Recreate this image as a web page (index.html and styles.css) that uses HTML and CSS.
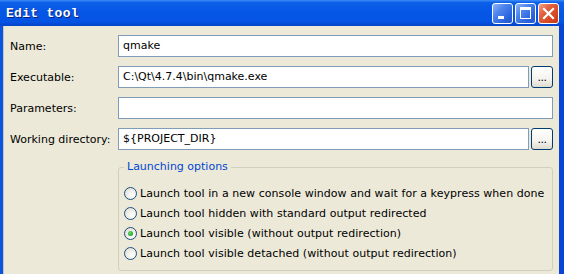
FILE: index.html
```html
<!DOCTYPE html>
<html lang="en">
<head>
  <meta charset="UTF-8">
  <title>Edit tool</title>
  <link rel="stylesheet" href="styles.css">
</head>
<body>
  <div class="window">
    <div class="titlebar">
      <span class="title">Edit tool</span>
      <div class="caption-buttons">
        <div class="cap cap-min"><span></span></div>
        <div class="cap cap-max"><span></span></div>
        <div class="cap cap-close">
          <svg width="13" height="13" viewBox="0 0 13 13"><path d="M2 2 L11 11 M11 2 L2 11" stroke="#fff" stroke-width="2.2" stroke-linecap="square"/></svg>
        </div>
      </div>
    </div>
    <div class="content">
      <div class="form">
        <label>Name:</label>
        <div class="field"><div class="input">qmake</div></div>

        <label>Executable:</label>
        <div class="field"><div class="input">C:\Qt\4.7.4\bin\qmake.exe</div><div class="browse">...</div></div>

        <label>Parameters:</label>
        <div class="field"><div class="input"></div></div>

        <label>Working directory:</label>
        <div class="field"><div class="input">${PROJECT_DIR}</div><div class="browse">...</div></div>
      </div>

      <fieldset class="group">
        <legend>Launching options</legend>
        <div class="radio"><span class="dot"></span>Launch tool in a new console window and wait for a keypress when done</div>
        <div class="radio"><span class="dot"></span>Launch tool hidden with standard output redirected</div>
        <div class="radio checked"><span class="dot"></span>Launch tool visible (without output redirection)</div>
        <div class="radio"><span class="dot"></span>Launch tool visible detached (without output redirection)</div>
      </fieldset>
    </div>
  </div>
</body>
</html>
```

FILE: styles.css
```css
:root {
  --face: #ece9d8;
  --edit-border: #7f9db9;
  --xp-blue: #0855e3;
}
body {
  margin: 0;
  background: var(--face);
  font-family: "DejaVu Sans", Tahoma, sans-serif;
  font-size: 11px;
  color: #000;
  overflow: hidden;
}
.window {
  width: 564px;
  height: 274px;
  overflow: hidden;
}
.titlebar {
  display: flex; align-items: center; justify-content: space-between;
  height: 26px;
  padding: 0 5px 0 6px;
  background: linear-gradient(to bottom, #3d8cf6 0%, #0c5fe8 10%, #0657e6 45%, #0553e2 85%, #0443c8 100%);
}
.title {
  font-family: "Liberation Mono", monospace;
  font-weight: bold;
  font-size: 13px;
  color: #fff;
  text-shadow: 1px 1px 0 #0a1e80;
  letter-spacing: 0.3px;
  margin-top: 1px;
}
.caption-buttons { display: flex; gap: 2px; }
.cap {
  width: 21px; height: 21px;
  box-sizing: border-box;
  border: 1px solid #fff;
  border-radius: 3px;
  position: relative;
  display: flex; align-items: center; justify-content: center;
}
.cap-min, .cap-max {
  background: linear-gradient(135deg, #8fb3f7 0%, #4d85ee 35%, #2a63dd 75%, #2457cf 100%);
}
.cap-min span {
  position: absolute; left: 5px; bottom: 4px;
  width: 6px; height: 3px; background: #fff;
}
.cap-max span {
  width: 9px; height: 8px;
  border: 1px solid #fff; border-top-width: 3px;
}
.cap-close {
  background: linear-gradient(135deg, #f1a08a 0%, #e2603d 35%, #d5451f 75%, #c33c1b 100%);
}
.content {
  height: 248px;
  border-left: 3px solid var(--xp-blue);
  border-right: 5px solid #0845d6;
  padding: 9px 6px 0 7px;
  box-shadow: inset 1px 0 0 #c8c6b6;
}
.form {
  display: grid;
  grid-template-columns: 108px 1fr;
  row-gap: 9px;
  align-items: center;
}
.field { display: flex; gap: 2px; }
.input {
  flex: 1;
  height: 22px;
  box-sizing: border-box;
  border: 1px solid var(--edit-border);
  background: #fff;
  padding: 0 4px;
  line-height: 20px;
  white-space: nowrap;
}
.browse {
  width: 22px; height: 22px;
  box-sizing: border-box;
  border: 1px solid #003c74;
  border-radius: 3px;
  background: linear-gradient(to bottom, #ffffff 0%, #f4f3ee 60%, #dedbd0 100%);
  text-align: center;
  line-height: 22px;
  font-size: 11px;
  letter-spacing: -0.5px;
}
.group {
  margin: 10px 0 0 108px;
  padding: 9px 4px 7px 5px;
  border: 1px solid #d0d0bf;
  border-radius: 3px;
}
.group legend {
  padding: 0 3px;
  color: #0046d5;
  line-height: 14px;
}
.radio {
  display: flex; align-items: center;
  height: 20px;
  white-space: nowrap;
  letter-spacing: 0.05px;
}
.dot {
  width: 13px; height: 13px;
  box-sizing: border-box;
  border: 1px solid #1c5180;
  border-radius: 50%;
  background: radial-gradient(circle at 65% 65%, #ffffff 0%, #f2f1ec 40%, #d6d3c6 100%);
  margin-right: 3px;
  display: flex; align-items: center; justify-content: center;
}
.radio.checked .dot::after {
  content: "";
  width: 5px; height: 5px;
  border-radius: 50%;
  background: radial-gradient(circle at 40% 40%, #6fe06f 0%, #21a121 70%);
}
```
